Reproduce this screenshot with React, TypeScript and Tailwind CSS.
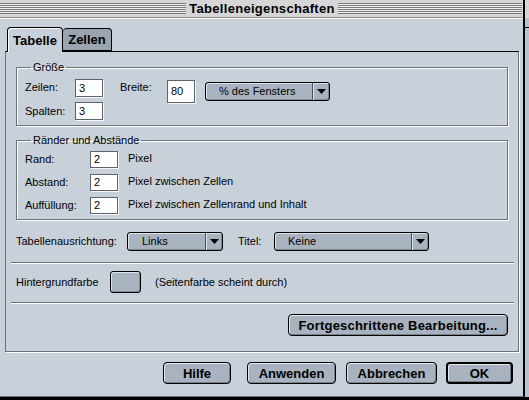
import React from 'react'

function Field ({ value, className }: { value: string, className: string }) {
  return (
    <div className={`bg-white border border-[#5e646c] shadow-[1px_1px_0_#f4f6f8] text-[11px] leading-none pl-[3px] flex items-center ${className}`}>
      {value}
    </div>
  )
}

function Arrow () {
  return (
    <svg width="9" height="5" viewBox="0 0 9 5">
      <path d="M0 0h9L4.5 5z" fill="#000" />
    </svg>
  )
}

function Dropdown ({ label, className, textClass }: { label: string, className: string, textClass: string }) {
  return (
    <div className={`h-[19px] flex rounded-[3px] border border-black bg-[#a9b3bf] shadow-[inset_1px_1px_0_#dde3ea,inset_-1px_-1px_0_#7f8994] ${className}`}>
      <span className={`flex-1 flex items-center text-[11px] leading-none ${textClass}`}>{label}</span>
      <span className="w-[17px] border-l border-[#4a5058] shadow-[inset_1px_0_0_#dde3ea] flex items-center justify-center">
        <Arrow />
      </span>
    </div>
  )
}

function Btn ({ label, className }: { label: string, className: string }) {
  return (
    <button className={`h-[22px] rounded-[4px] bg-[#a9b3bf] shadow-[inset_1px_1px_0_#e3e8ee,inset_-1px_-1px_0_#76808b] font-bold text-[13px] leading-none text-black flex items-center justify-center ${className}`}>
      {label}
    </button>
  )
}

function Group ({ title, className, children }: { title: string, className: string, children: React.ReactNode }) {
  return (
    <fieldset className={`border border-[#6b717a] shadow-[1px_1px_0_#fff,inset_1px_1px_0_#fff] pl-[8px] ${className}`}>
      <legend className="ml-[6px] px-[2px] text-[11px] leading-[12px]">{title}</legend>
      {children}
    </fieldset>
  )
}

function Separator ({ className }: { className: string }) {
  return <div className={`h-[2px] border-t border-[#6b717a] bg-white ml-[-5px] mr-[-6px] ${className}`} />
}

function Stripes () {
  return <div className="flex-1 h-[11px] bg-[repeating-linear-gradient(to_bottom,#7a7a7a_0px,#7a7a7a_1px,#f0f0f0_1px,#f0f0f0_2px)]" />
}

export default function App () {
  return (
    <div className="w-[529px] h-[400px] bg-black flex overflow-hidden font-['Liberation_Sans',Arial,sans-serif] text-black">
      <div className="w-[525px] h-[397px] flex flex-col bg-[#c8d0d9] border-r-2 border-b border-r-black border-b-[#6b717a]">
        {/* title bar */}
        <div className="h-[18px] flex items-center bg-[#d6d6d6] border-b border-[#8e8e8e] shadow-[0_1px_0_#fff]">
          <div className="w-[186px] flex"><Stripes /></div>
          <div className="flex-1 text-center font-bold text-[13px] tracking-[0.3px] leading-none">Tabelleneigenschaften</div>
          <div className="w-[185px] flex pr-[1px]"><Stripes /></div>
        </div>

        {/* tabs */}
        <div className="flex items-end ml-[7px] mt-[9px] relative z-10 h-[25px]">
          <div className="h-[25px] w-[56px] rounded-t-[4px] border border-b-0 border-black bg-[#c8d0d9] shadow-[inset_1px_1px_0_#fff] flex items-center justify-center font-bold text-[13px] leading-none">
            Tabelle
          </div>
          <div className="h-[23px] w-[49px] mb-[1px] rounded-t-[4px] border border-black border-l-0 bg-[#9aa5b1] flex items-center justify-center font-bold text-[13px] leading-none">
            Zellen
          </div>
        </div>

        {/* panel */}
        <div className="ml-[5px] w-[514px] -mt-[1px] border border-[#6b717a] border-t-black shadow-[1px_1px_0_#fff] px-[10px] pb-[15px] flex flex-col">
          <Group title="Größe" className="mt-[9px] pb-[5px]">
            <div className="flex items-start mt-[6px]">
              <div className="flex flex-col gap-[5px]">
                <div className="flex items-start">
                  <span className="w-[50px] text-[11px] leading-none pt-[3px]">Zeilen:</span>
                  <Field value="3" className="w-[28px] h-[18px]" />
                </div>
                <div className="flex items-start">
                  <span className="w-[50px] text-[11px] leading-none pt-[4px]">Spalten:</span>
                  <Field value="3" className="w-[28px] h-[18px]" />
                </div>
              </div>
              <span className="ml-[17px] w-[47px] text-[11px] leading-none pt-[3px]">Breite:</span>
              <Field value="80" className="w-[28px] h-[23px] mt-[1px]" />
              <Dropdown label="% des Fensters" className="ml-[10px] w-[125px] mt-[3px]" textClass="pl-[13px]" />
            </div>
          </Group>

          <Group title="Ränder und Abstände" className="mt-[8px] pb-[5px]">
            <div className="flex flex-col gap-[6px] mt-[5px]">
              {[
                ['Rand:', 'Pixel'],
                ['Abstand:', 'Pixel zwischen Zellen'],
                ['Auffüllung:', 'Pixel zwischen Zellenrand und Inhalt']
              ].map(([label, note]) => (
                <div key={label} className="flex items-center">
                  <span className="w-[65px] text-[11px] leading-none">{label}</span>
                  <Field value="2" className="w-[28px] h-[17px]" />
                  <span className="ml-[10px] text-[11px] leading-none -mt-[3px]">{note}</span>
                </div>
              ))}
            </div>
          </Group>

          <div className="flex items-center mt-[12px]">
            <span className="w-[111px] text-[11px] leading-none">Tabellenausrichtung:</span>
            <Dropdown label="Links" className="w-[96px]" textClass="pl-[14px]" />
            <span className="ml-[15px] w-[36px] text-[11px] leading-none">Titel:</span>
            <Dropdown label="Keine" className="w-[155px]" textClass="pl-[13px]" />
          </div>

          <Separator className="mt-[11px]" />

          <div className="flex items-center mt-[7px]">
            <span className="w-[94px] text-[11px] leading-none">Hintergrundfarbe</span>
            <div className="w-[31px] h-[22px] rounded-[3px] border border-black bg-[#a9b3bf] shadow-[inset_1px_1px_0_#dde3ea,inset_-1px_-1px_0_#7f8994]" />
            <span className="ml-[14px] text-[11px] leading-none">(Seitenfarbe scheint durch)</span>
          </div>

          <Separator className="mt-[9px]" />

          <div className="flex justify-end mt-[10px]">
            <Btn label="Fortgeschrittene Bearbeitung..." className="w-[220px] h-[21px] border border-black tracking-[0.2px]" />
          </div>
        </div>

        {/* bottom buttons */}
        <div className="flex justify-end mt-[10px] mr-[10px]">
          <Btn label="Hilfe" className="w-[68px] border border-black" />
          <Btn label="Anwenden" className="w-[89px] ml-[16px] border border-black" />
          <Btn label="Abbrechen" className="w-[91px] ml-[10px] border border-black" />
          <Btn label="OK" className="w-[67px] ml-[9px] border-2 border-black" />
        </div>
      </div>
      <div className="w-[4px] h-[397px] bg-[#b9c1ca] flex flex-col">
        <div className="h-[18px] bg-[#d6d6d6]" />
        <div className="h-[1px] bg-black mt-[9px]" />
      </div>
    </div>
  )
}
